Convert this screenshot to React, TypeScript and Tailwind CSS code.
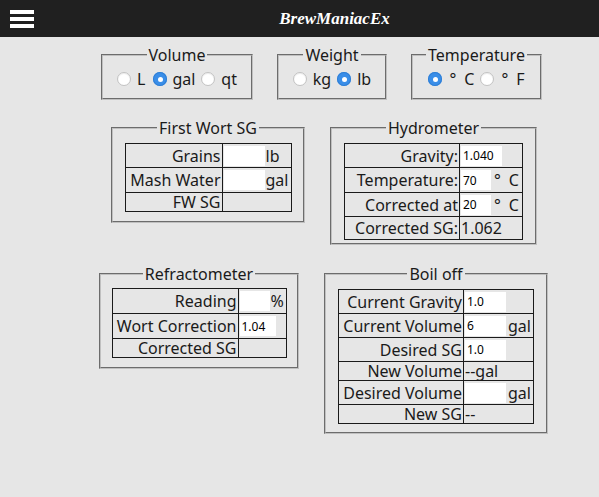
import type { ReactNode } from "react";

function Radio({ checked }: { checked?: boolean }) {
  if (checked) {
    return (
      <span className="flex h-[14px] w-[14px] shrink-0 items-center justify-center rounded-full bg-[#3a8ee8] shadow-[inset_0_0_0_1px_#2f7fd6]">
        <span className="block h-[5px] w-[5px] rounded-full bg-white" />
      </span>
    );
  }
  return <span className="block h-[14px] w-[14px] shrink-0 rounded-full border border-[#c2c2c2] bg-white shadow-[inset_0_1px_1px_rgba(0,0,0,0.08)]" />;
}

function Box({ title, className, children }: { title: string; className: string; children: ReactNode }) {
  return (
    <fieldset className={`border-2 [border-style:groove] border-[#c0c0c0] ${className}`}>
      <legend className="mx-auto px-[2px] leading-[18px]">{title}</legend>
      {children}
    </fieldset>
  );
}

function Field({ value = "", w = "w-[41px]" }: { value?: string; w?: string }) {
  return (
    <input
      readOnly
      value={value}
      className={`h-[20px] ${w} bg-white pl-[2px] text-[12px] text-black outline-none`}
    />
  );
}

type Row = { label: string; h: string; cell: ReactNode };

function Grid({ rows, width, first }: { rows: Row[]; width: string; first: string }) {
  return (
    <table className={`mx-auto table-fixed border-collapse border border-[#1a1a1a] ${width}`}>
      <colgroup>
        <col className={first} />
        <col />
      </colgroup>
      <tbody>
        {rows.map((r) => (
          <tr key={r.label} className={r.h}>
            <td className="whitespace-nowrap border border-[#1a1a1a] p-0 pr-[1px] text-right align-middle leading-[18px]">
              {r.label}
            </td>
            <td className="whitespace-nowrap border border-[#1a1a1a] p-0 pl-[1px] align-middle leading-[18px]">
              <div className="flex items-center">{r.cell}</div>
            </td>
          </tr>
        ))}
      </tbody>
    </table>
  );
}

const Deg = ({ unit }: { unit: string }) => (
  <span className="ml-[3px] flex">
    <span>°</span>
    <span className="ml-[8px]">{unit}</span>
  </span>
);

export default function App() {
  return (
    <div className="min-h-screen bg-[#e6e6e6] font-['Noto_Sans',sans-serif] text-[16px] text-[#1a1a1a]">
      <header className="flex h-[37px] items-center bg-[#202020]">
        <div className="flex w-[70px] flex-col gap-[3px] pl-[10px]">
          <span className="h-[4px] w-[24px] bg-white" />
          <span className="h-[4px] w-[24px] bg-white" />
          <span className="h-[4px] w-[24px] bg-white" />
        </div>
        <div className="flex flex-1 justify-center">
          <span className="font-['Liberation_Serif',serif] text-[17px] font-bold italic text-white">BrewManiacEx</span>
        </div>
      </header>

      <div className="mt-[9px] flex items-start gap-[24px] pl-[101px]">
        <Box title="Volume" className="w-[152px] pb-[9px] pt-[5px]">
          <div className="flex h-[20px] items-center justify-center">
            <Radio />
            <span className="ml-[6px]">L</span>
            <span className="ml-[8px] flex"><Radio checked /></span>
            <span className="ml-[5px]">gal</span>
            <span className="ml-[6px] flex"><Radio /></span>
            <span className="ml-[6px]">qt</span>
          </div>
        </Box>
        <Box title="Weight" className="w-[110px] pb-[9px] pt-[5px]">
          <div className="flex h-[20px] items-center justify-center">
            <Radio />
            <span className="ml-[6px]">kg</span>
            <span className="ml-[6px] flex"><Radio checked /></span>
            <span className="ml-[6px]">lb</span>
          </div>
        </Box>
        <Box title="Temperature" className="w-[131px] pb-[9px] pt-[5px]">
          <div className="flex h-[20px] items-center justify-center">
            <Radio checked />
            <span className="ml-[4px] flex"><Deg unit="C" /></span>
            <span className="ml-[6px] flex"><Radio /></span>
            <span className="ml-[4px] flex"><Deg unit="F" /></span>
          </div>
        </Box>
      </div>

      <div className="mt-[19px] flex items-start gap-[25px] pl-[111px]">
        <Box title="First Wort SG" className="w-[194px] pb-[9px] pt-[6px]">
          <Grid
            width="w-[167px]"
            first="w-[97px]"
            rows={[
              { label: "Grains", h: "h-[24px]", cell: <><Field /><span className="ml-[1px]">lb</span></> },
              { label: "Mash Water", h: "h-[25px]", cell: <><Field /><span className="ml-[1px]">gal</span></> },
              { label: "FW SG", h: "h-[18px]", cell: null },
            ]}
          />
        </Box>
        <Box title="Hydrometer" className="w-[207px] pb-[3px] pt-[6px]">
          <Grid
            width="w-[179px]"
            first="w-[115px]"
            rows={[
              { label: "Gravity:", h: "h-[24px]", cell: <Field value="1.040" /> },
              { label: "Temperature:", h: "h-[25px]", cell: <><Field value="70" w="w-[30px]" /><Deg unit="C" /></> },
              { label: "Corrected at", h: "h-[24px]", cell: <><Field value="20" w="w-[30px]" /><Deg unit="C" /></> },
              { label: "Corrected SG:", h: "h-[23px]", cell: <span>1.062</span> },
            ]}
          />
        </Box>
      </div>

      <div className="mt-[20px] flex items-start gap-[25px] pl-[99px]">
        <Box title="Refractometer" className="w-[200px] pb-[9px] pt-[5px]">
          <Grid
            width="w-[175px]"
            first="w-[126px]"
            rows={[
              { label: "Reading", h: "h-[25px]", cell: <><Field w="w-[30px]" /><span className="ml-[1px]">%</span></> },
              { label: "Wort Correction", h: "h-[25px]", cell: <Field value="1.04" w="w-[36px]" /> },
              { label: "Corrected SG", h: "h-[19px]", cell: null },
            ]}
          />
        </Box>
        <Box title="Boil off" className="w-[224px] pb-[8px] pt-[6px]">
          <Grid
            width="w-[196px]"
            first="w-[125px]"
            rows={[
              { label: "Current Gravity", h: "h-[24px]", cell: <Field value="1.0" /> },
              { label: "Current Volume", h: "h-[24px]", cell: <><Field value="6" /><span className="ml-[2px]">gal</span></> },
              { label: "Desired SG", h: "h-[24px]", cell: <Field value="1.0" /> },
              { label: "New Volume", h: "h-[18px]", cell: <span>--gal</span> },
              { label: "Desired Volume", h: "h-[24px]", cell: <><Field /><span className="ml-[2px]">gal</span></> },
              { label: "New SG", h: "h-[19px]", cell: <span>--</span> },
            ]}
          />
        </Box>
      </div>
    </div>
  );
}
